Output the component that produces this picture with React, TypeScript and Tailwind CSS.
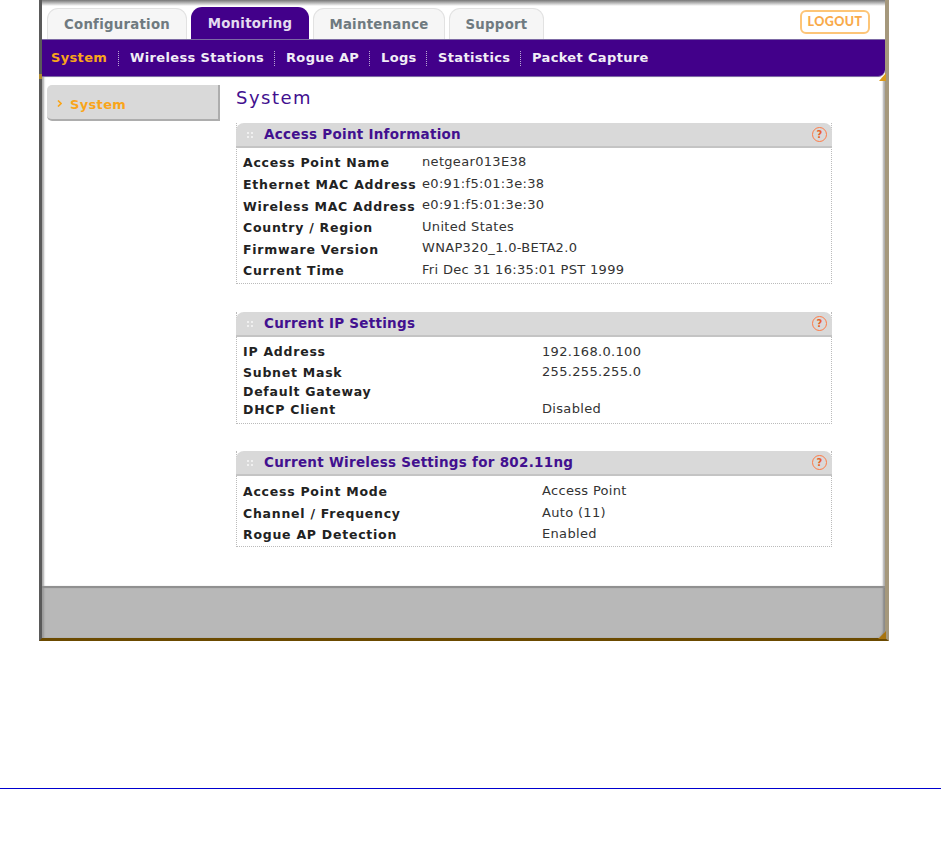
const font = "font-['DejaVu_Sans','Liberation_Sans',sans-serif]";

const tabs = [
  { label: "Configuration", width: "w-[140px]", active: false },
  { label: "Monitoring", width: "w-[118px]", active: true },
  { label: "Maintenance", width: "w-[132px]", active: false },
  { label: "Support", width: "w-[95px]", active: false },
];

const subnav = [
  { label: "System", active: true, width: "w-[79px]" },
  { label: "Wireless Stations", active: false, width: "w-[156px]" },
  { label: "Rogue AP", active: false, width: "w-[95px]" },
  { label: "Logs", active: false, width: "w-[57px]" },
  { label: "Statistics", active: false, width: "w-[94px]" },
  { label: "Packet Capture", active: false, width: "w-[130px]" },
];

const accessPoint = [
  ["Access Point Name", "netgear013E38"],
  ["Ethernet MAC Address", "e0:91:f5:01:3e:38"],
  ["Wireless MAC Address", "e0:91:f5:01:3e:30"],
  ["Country / Region", "United States"],
  ["Firmware Version", "WNAP320_1.0-BETA2.0"],
  ["Current Time", "Fri Dec 31 16:35:01 PST 1999"],
];

const ipSettings = [
  { name: "IP Address", value: "192.168.0.100", height: "h-[21px]" },
  { name: "Subnet Mask", value: "255.255.255.0", height: "h-[20px]" },
  { name: "Default Gateway", value: "", height: "h-[18px]" },
  { name: "DHCP Client", value: "Disabled", height: "h-[18px]" },
];

const wireless = [
  ["Access Point Mode", "Access Point"],
  ["Channel / Frequency", "Auto (11)"],
  ["Rogue AP Detection", "Enabled"],
];

function HelpIcon() {
  return (
    <span className="flex h-[15px] w-[15px] items-center justify-center rounded-full border-[1.5px] border-[#ff7a45] text-[10px] leading-none font-bold text-[#e8622c]">
      ?
    </span>
  );
}

function SectionHeader({ title }: { title: string }) {
  return (
    <div className="-mx-px flex h-[25px] items-center rounded-t-[8px] border-b-2 border-[#c4c4c4] bg-[#d9d9d9] pr-[5px] pl-[11px]">
      <span className="grid grid-cols-2 gap-[2px]">
        <i className="h-[2px] w-[2px] bg-[#f0f0f0]" />
        <i className="h-[2px] w-[2px] bg-[#f0f0f0]" />
        <i className="h-[2px] w-[2px] bg-[#f0f0f0]" />
        <i className="h-[2px] w-[2px] bg-[#f0f0f0]" />
      </span>
      <span className="ml-[11px] flex-1 text-[13.5px] font-bold tracking-[0.27px] text-[#42108f]">{title}</span>
      <HelpIcon />
    </div>
  );
}

function Row({ name, value, nameClass, valueClass, height }: { name: string; value: string; nameClass: string; valueClass: string; height: string }) {
  return (
    <div className={`flex items-center pl-[6px] ${height}`}>
      <span className={`shrink-0 pt-[2px] text-[12.5px] font-bold tracking-[0.75px] whitespace-nowrap text-[#222] ${nameClass}`}>{name}</span>
      <span className={`text-[13px] tracking-[0.32px] whitespace-nowrap text-[#333] ${valueClass}`}>{value}</span>
    </div>
  );
}

export default function App() {
  return (
    <div className={`h-[856px] w-[941px] overflow-hidden bg-white ${font}`}>
      <div className="relative ml-[39px] flex h-[641px] w-[850px] flex-col border-r-4 border-b-[3px] border-l-[3px] border-r-[#a5987c] border-b-[#6b4a00] border-l-[#5a5a5a]">
        <div className="h-[6px] shrink-0 bg-gradient-to-b from-[#777] to-white" />

        <div className="flex h-[33px] shrink-0 items-end pl-[5px]">
          {tabs.map((tab) => (
            <div key={tab.label} className={`${tab.width} mr-[4px] flex items-center justify-center rounded-t-[11px] pt-[2px] text-[13.3px] font-bold tracking-[0.25px] ${tab.active ? "h-[32px] bg-[#42008a] text-[#e4dcf0]" : "h-[31px] border border-b-0 border-[#e2e2e2] bg-[#f6f6f6] text-[#6f7a80]"}`}>
              {tab.label}
            </div>
          ))}
          <div className="mr-[15px] mb-[5px] ml-auto flex h-[24px] w-[70px] items-center justify-center rounded-[6px] border-2 border-[#fdc577] pt-[1px] font-['Lato',sans-serif] text-[12.5px] font-black tracking-[0.4px] text-[#f9aa4a]">
            LOGOUT
          </div>
        </div>

        <div className="flex h-[38px] shrink-0 items-center rounded-br-[7px] border-y border-y-[#7d6aa5] bg-[#42008a] pl-[9px]">
          {subnav.map((item, index) => (
            <div key={item.label} className={`${item.width} flex items-center`}>
              <span className={`text-[13px] font-bold tracking-[0.35px] whitespace-nowrap ${item.active ? "text-[#f9a51a]" : "text-[#f1edf6]"}`}>{item.label}</span>
              {index < subnav.length - 1 && <span className="mr-[11px] ml-auto h-[15px] border-l border-dotted border-[#b9a8d3]" />}
            </div>
          ))}
        </div>

        <div className="flex min-h-0 flex-1 bg-white shadow-[inset_3px_0_2px_-1px_#aaa,inset_-3px_0_2px_-1px_#aaa]">
          <div className="w-[194px] shrink-0 pt-[8px] pl-[5px]">
            <div className="flex h-[36px] w-[173px] items-center rounded-l-[5px] border-r-2 border-b-2 border-[#adadad] bg-[#d9d9d9] pt-[5px] pl-[10px] text-[13px] font-bold tracking-[0.35px] text-[#f9a51a]">
              <svg width="5" height="7" viewBox="0 0 5 7" className="mr-[8px] -mt-[3px]">
                <path d="M1 0.5 4 3.5 1 6.5" fill="none" stroke="#f9a51a" strokeWidth="1.6" />
              </svg>
              System
            </div>
          </div>

          <div className="w-[596px] shrink-0">
            <h1 className="mt-[9px] h-[37px] text-[18px] leading-[24px] tracking-[1.5px] text-[#42108f]">System</h1>

            <section className="h-[161px] border-x border-b border-dotted border-[#bbb]">
              <SectionHeader title="Access Point Information" />
              <div className="pt-[4px]">
                {accessPoint.map(([name, value]) => (
                  <Row key={name} name={name} value={value} nameClass="w-[179px]" valueClass="pb-[2px]" height="h-[21.6px]" />
                ))}
              </div>
            </section>

            <section className="mt-[28px] h-[112px] border-x border-b border-dotted border-[#bbb]">
              <SectionHeader title="Current IP Settings" />
              <div className="pt-[4px]">
                {ipSettings.map((row) => (
                  <Row key={row.name} name={row.name} value={row.value} nameClass="w-[299px]" valueClass="" height={row.height} />
                ))}
              </div>
            </section>

            <section className="mt-[27px] h-[96px] border-x border-b border-dotted border-[#bbb]">
              <SectionHeader title="Current Wireless Settings for 802.11ng" />
              <div className="pt-[5px]">
                {wireless.map(([name, value]) => (
                  <Row key={name} name={name} value={value} nameClass="w-[299px]" valueClass="pb-[2px]" height="h-[21.5px]" />
                ))}
              </div>
            </section>
          </div>
        </div>

        <div className="h-[52px] shrink-0 rounded-br-[7px] border-t-2 border-t-[#909090] bg-[#b8b8b8] shadow-[inset_3px_0_2px_-1px_#999,inset_-3px_0_2px_-1px_#888]" />

        <svg width="7" height="8" viewBox="0 0 7 8" className="absolute top-[73px] -right-px">
          <path d="M7 0V8H0Z" fill="#d99a1c" />
        </svg>
        <svg width="3" height="5" viewBox="0 0 3 5" className="absolute top-[74px] -left-[3px]">
          <path d="M0 0H3V5H0Z" fill="#b08a2c" />
        </svg>
        <svg width="8" height="8" viewBox="0 0 8 8" className="absolute -right-px -bottom-px">
          <path d="M8 0V8H0Z" fill="#a8740f" />
        </svg>
      </div>

      <div className="mt-[147px] h-px bg-[#0000d0]" />
    </div>
  );
}
